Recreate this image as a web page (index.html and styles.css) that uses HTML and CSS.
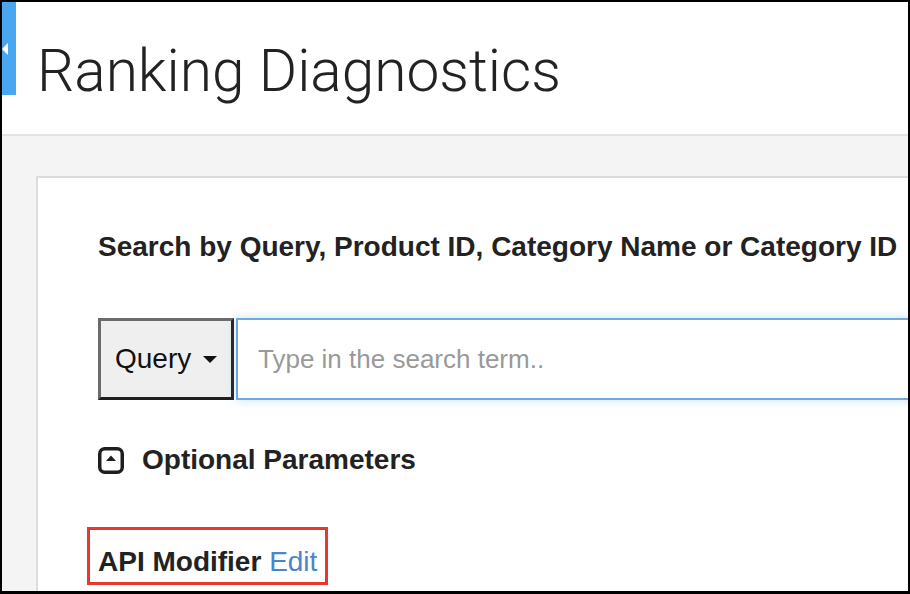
FILE: index.html
```html
<!DOCTYPE html>
<html lang="en">
<head>
<meta charset="utf-8">
<title>Ranking Diagnostics</title>
<link rel="stylesheet" href="styles.css">
</head>
<body>
<div class="frame">
  <div class="side-toggle"><span class="side-arrow"></span></div>
  <header class="page-header">
    <h1 class="page-title">Ranking Diagnostics</h1>
  </header>
  <main class="main">
    <section class="card">
      <h2 class="section-title">Search by Query, Product ID, Category Name or Category ID</h2>
      <div class="search-row">
        <button class="type-select" type="button">Query <span class="caret"></span></button>
        <input class="search-input" type="text" placeholder="Type in the search term..">
      </div>
      <div class="optional-row">
        <svg class="toggle-icon" width="26" height="27" viewBox="0 0 26 27" aria-hidden="true">
          <rect x="1.75" y="1.75" width="22.5" height="23.5" rx="5" ry="5" fill="none" stroke="#1e1e1e" stroke-width="3.5"/>
          <polygon points="8,14 13,8.5 18,14" fill="#1e1e1e"/>
        </svg>
        <span class="optional-label">Optional Parameters</span>
      </div>
      <div class="api-modifier"><span class="api-label">API Modifier</span>&nbsp;<a class="edit-link" href="#">Edit</a></div>
    </section>
  </main>
</div>
</body>
</html>
```
FILE: styles.css
```css
html, body {
  margin: 0;
  padding: 0;
  background: #fff;
}

.frame {
  position: relative;
  width: 910px;
  height: 594px;
  box-sizing: border-box;
  border: 2px solid #000;
  border-bottom-width: 3px;
  overflow: hidden;
  display: flex;
  flex-direction: column;
  font-family: "Liberation Sans", Arial, sans-serif;
  color: #222;
}

.side-toggle {
  position: absolute;
  left: 0;
  top: 0;
  width: 14px;
  height: 93px;
  background: #4aa6ee;
}

.side-arrow {
  position: absolute;
  left: 0;
  top: 41px;
  width: 0;
  height: 0;
  border-top: 6px solid transparent;
  border-bottom: 6px solid transparent;
  border-right: 6px solid #fff;
}

.page-header {
  flex: none;
  height: 134px;
  box-sizing: border-box;
  padding: 40px 0 0 35px;
  border-bottom: 2px solid #e3e3e3;
  background: #fff;
}

.page-title {
  margin: 0;
  font-family: Roboto, "Liberation Sans", sans-serif;
  font-weight: 300;
  font-size: 58.6px;
  line-height: 59px;
  color: #222;
  white-space: nowrap;
}

.main {
  flex: 1;
  background: #f4f4f4;
  padding: 40px 0 0 34px;
}

.card {
  width: 1000px;
  min-height: 500px;
  background: #fff;
  border: 2px solid #dcdcdc;
  padding: 53px 0 0 60px;
}

.section-title {
  margin: 0;
  font-size: 28px;
  line-height: 32px;
  font-weight: bold;
  color: #222;
  white-space: nowrap;
}

.search-row {
  display: flex;
  margin-top: 55px;
  height: 82px;
}

.type-select {
  flex: none;
  width: 136px;
  height: 82px;
  box-sizing: border-box;
  margin: 0;
  padding: 0 0 0 14px;
  display: flex;
  align-items: center;
  background: #efefef;
  border-style: solid;
  border-width: 3px;
  border-color: #6b6b6b #1f1f1f #1f1f1f #6b6b6b;
  font-family: "Liberation Sans", Arial, sans-serif;
  font-size: 28px;
  color: #111;
  text-align: left;
}

.caret {
  display: inline-block;
  width: 0;
  height: 0;
  margin-left: 12px;
  border-left: 7px solid transparent;
  border-right: 7px solid transparent;
  border-top: 7px solid #111;
}

.search-input {
  flex: 1;
  height: 82px;
  box-sizing: border-box;
  margin: 0 0 0 2px;
  padding: 0 0 0 20px;
  border: 2px solid #72a7df;
  outline: none;
  box-shadow: 0 0 10px rgba(102, 175, 233, 0.35);
  font-family: "Liberation Sans", Arial, sans-serif;
  font-size: 26px;
  color: #222;
  background: #fff;
}

.search-input::placeholder {
  color: #999;
  opacity: 1;
}

.optional-row {
  display: flex;
  align-items: center;
  gap: 18px;
  margin-top: 44px;
  height: 32px;
}

.toggle-icon {
  flex: none;
  display: block;
}

.optional-label {
  font-size: 28px;
  line-height: 32px;
  font-weight: bold;
  color: #222;
}

.api-modifier {
  display: inline-flex;
  align-items: baseline;
  margin-top: 51px;
  margin-left: -11px;
  padding: 16px 8px 4px 8px;
  border: 3px solid #e8382d;
  font-size: 28px;
  line-height: 32px;
  white-space: nowrap;
}

.api-label {
  font-weight: bold;
  color: #222;
}

.edit-link {
  color: #4a86c8;
  text-decoration: none;
}
```
